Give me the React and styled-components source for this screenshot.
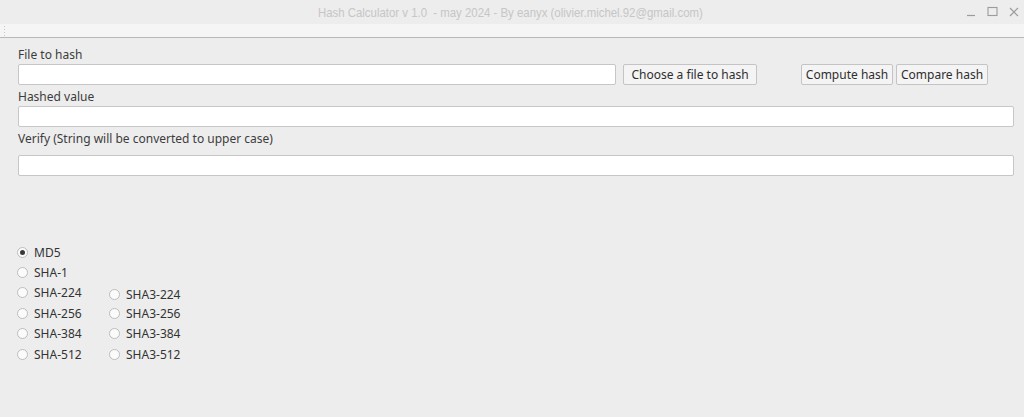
import styled, { createGlobalStyle } from "styled-components";

const GlobalStyle = createGlobalStyle`
  html, body {
    margin: 0;
    padding: 0;
    background: #ededed;
    font-family: "Noto Sans", "DejaVu Sans", sans-serif;
    font-size: 12px;
    color: #3c3c3c;
  }
`;

const Window = styled.div`
  width: 1024px;
  height: 417px;
  background: #ededed;
  display: flex;
  flex-direction: column;
  overflow: hidden;
`;

const TitleBar = styled.div`
  height: 24px;
  display: flex;
  align-items: center;
  justify-content: center;
  position: relative;
  color: #c6c6c6;
  font-family: "Liberation Sans", sans-serif;
  font-size: 13px;
`;

// the window manager uses a condensed face, so squeeze the regular one
const Title = styled.span`
  display: inline-block;
  margin-left: -4px;
  transform: scaleX(0.877);
  white-space: nowrap;
`;

const Controls = styled.div`
  position: absolute;
  right: 5px;
  top: 6px;
  display: flex;
  gap: 11px;
  align-items: center;
`;

const ToolStrip = styled.div`
  height: 13px;
  background: #f5f5f5;
  border-bottom: 1px solid #b8b8b8;
  display: flex;
  align-items: center;
  padding-left: 3px;
`;

const Grip = styled.div`
  width: 3px;
  height: 11px;
  background-image: radial-gradient(circle, #c6c6c6 0.8px, transparent 1px);
  background-size: 3px 3px;
`;

const Form = styled.div`
  padding: 7px 10px 0 18px;
  display: flex;
  flex-direction: column;
`;

const Label = styled.div`
  height: 19px;
  line-height: 19px;
  margin-bottom: ${(p) => p.$gap || 0}px;
`;

const Row = styled.div`
  display: flex;
  align-items: flex-start;
  height: 23px;
`;

const Field = styled.div`
  box-sizing: border-box;
  height: 21px;
  width: ${(p) => (p.$w ? `${p.$w}px` : "auto")};
  flex: ${(p) => (p.$w ? "none" : 1)};
  background: #ffffff;
  border: 1px solid #c6c6c6;
  border-radius: 2px;
`;

const Button = styled.div`
  box-sizing: border-box;
  height: 21px;
  width: ${(p) => (p.$w ? `${p.$w}px` : "auto")};
  padding: 0 5px;
  display: flex;
  align-items: center;
  justify-content: center;
  background: #f4f4f4;
  border: 1px solid #c4c4c4;
  border-radius: 2px;
  color: #2e2e2e;
  margin-left: ${(p) => p.$ml || 0}px;
  white-space: nowrap;
`;

const Radios = styled.div`
  margin-top: 64px;
  padding-left: 17px;
  display: grid;
  grid-template-columns: 92px auto;
  grid-auto-rows: 20.4px;
  width: 200px;
`;

const Radio = styled.div`
  display: flex;
  align-items: center;
  gap: 6px;
  color: #333;
  transform: translateY(${(p) => p.$shift || 0}px);
`;

const Dot = styled.span`
  box-sizing: border-box;
  width: 11px;
  height: 11px;
  border-radius: 50%;
  border: 1px solid #bdbdbd;
  background: #fbfbfb;
  display: flex;
  align-items: center;
  justify-content: center;

  &::after {
    content: "";
    width: 5px;
    height: 5px;
    border-radius: 50%;
    background: ${(p) => (p.$on ? "#3a3a3a" : "transparent")};
  }
`;

const RadioItem = ({ label, on, shift }) => (
  <Radio $shift={shift}>
    <Dot $on={on} />
    {label}
  </Radio>
);

const App = () => {
  return (
    <Window>
      <GlobalStyle />
      <TitleBar>
        <Title>Hash Calculator v 1.0&nbsp; - may 2024 - By eanyx (olivier.michel.92@gmail.com)</Title>
        <Controls>
          <svg width="10" height="10" viewBox="0 0 10 10">
            <path d="M1 8.5h8" stroke="#9c9c9c" strokeWidth="1.2" />
          </svg>
          <svg width="11" height="11" viewBox="0 0 11 11">
            <rect x="1" y="1.5" width="9" height="8" fill="none" stroke="#9c9c9c" strokeWidth="1.1" />
          </svg>
          <svg width="10" height="10" viewBox="0 0 10 10">
            <path d="M1 1l8 8M9 1l-8 8" stroke="#9c9c9c" strokeWidth="1.2" />
          </svg>
        </Controls>
      </TitleBar>
      <ToolStrip>
        <Grip />
      </ToolStrip>
      <Form>
        <Label>File to hash</Label>
        <Row>
          <Field $w={598} />
          <Button $ml={7} $w={134}>Choose a file to hash</Button>
          <Button $ml={44} $w={92}>Compute hash</Button>
          <Button $ml={3} $w={92}>Compare hash</Button>
        </Row>
        <Label>Hashed value</Label>
        <Row>
          <Field />
        </Row>
        <Label $gap={7}>Verify (String will be converted to upper case)</Label>
        <Row>
          <Field />
        </Row>
      </Form>
      <Radios>
        <RadioItem label="MD5" on />
        <span />
        <RadioItem label="SHA-1" />
        <span />
        <RadioItem label="SHA-224" />
        <RadioItem label="SHA3-224" shift={2} />
        <RadioItem label="SHA-256" />
        <RadioItem label="SHA3-256" />
        <RadioItem label="SHA-384" />
        <RadioItem label="SHA3-384" />
        <RadioItem label="SHA-512" />
        <RadioItem label="SHA3-512" />
      </Radios>
    </Window>
  );
};

export default App;
